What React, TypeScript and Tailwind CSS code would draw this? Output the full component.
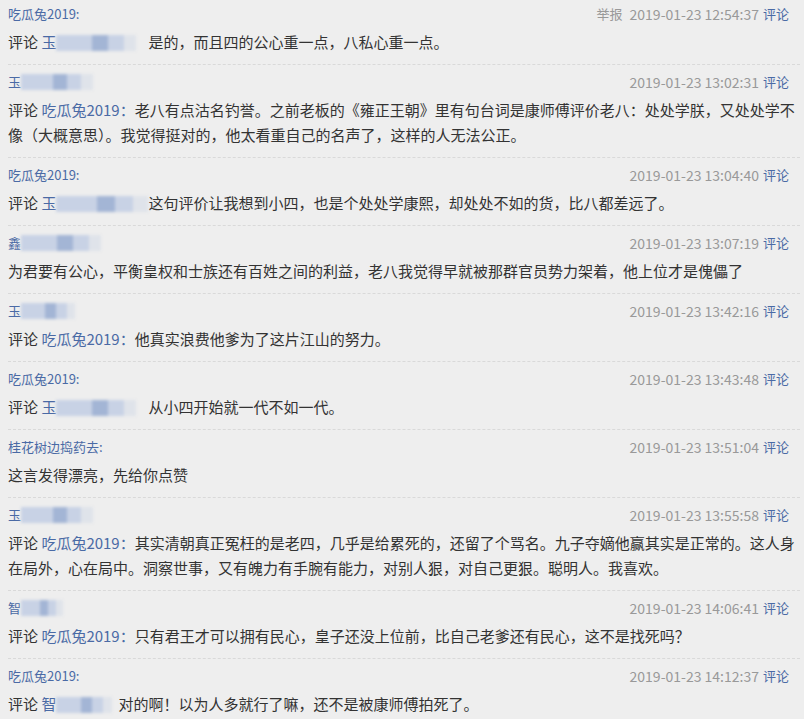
import React from 'react';

type Blur = { w: number; tone?: 'a' | 'b' | 'c' };

interface Entry {
  name: string;
  nameBlur?: number;
  time: string;
  report?: boolean;
  target?: string;
  targetBlur?: number;
  gap?: number;
  text: string;
}

const entries: Entry[] = [
  { name: '吃瓜兔2019:', time: '2019-01-23 12:54:37', report: true, target: '玉', targetBlur: 80, gap: 12, text: '是的，而且四的公心重一点，八私心重一点。' },
  { name: '玉', nameBlur: 72, time: '2019-01-23 13:02:31', target: '吃瓜兔2019：', text: '老八有点沽名钓誉。之前老板的《雍正王朝》里有句台词是康师傅评价老八：处处学朕，又处处学不像（大概意思）。我觉得挺对的，他太看重自己的名声了，这样的人无法公正。' },
  { name: '吃瓜兔2019:', time: '2019-01-23 13:04:40', target: '玉', targetBlur: 92, gap: 0, text: '这句评价让我想到小四，也是个处处学康熙，却处处不如的货，比八都差远了。' },
  { name: '鑫', nameBlur: 80, time: '2019-01-23 13:07:19', text: '为君要有公心，平衡皇权和士族还有百姓之间的利益，老八我觉得早就被那群官员势力架着，他上位才是傀儡了' },
  { name: '玉', nameBlur: 54, time: '2019-01-23 13:42:16', target: '吃瓜兔2019：', text: '他真实浪费他爹为了这片江山的努力。' },
  { name: '吃瓜兔2019:', time: '2019-01-23 13:43:48', target: '玉', targetBlur: 80, gap: 12, text: '从小四开始就一代不如一代。' },
  { name: '桂花树边捣药去:', time: '2019-01-23 13:51:04', text: '这言发得漂亮，先给你点赞' },
  { name: '玉', nameBlur: 72, time: '2019-01-23 13:55:58', target: '吃瓜兔2019：', text: '其实清朝真正冤枉的是老四，几乎是给累死的，还留了个骂名。九子夺嫡他赢其实是正常的。这人身在局外，心在局中。洞察世事，又有魄力有手腕有能力，对别人狠，对自己更狠。聪明人。我喜欢。' },
  { name: '智', nameBlur: 42, time: '2019-01-23 14:06:41', target: '吃瓜兔2019：', text: '只有君王才可以拥有民心，皇子还没上位前，比自己老爹还有民心，这不是找死吗？' },
  { name: '吃瓜兔2019:', time: '2019-01-23 14:12:37', target: '智', targetBlur: 56, gap: 6, text: '对的啊！以为人多就行了嘛，还不是被康师傅拍死了。' },
];

// smudged nickname, painted as a few soft tinted blocks
const Smudge = ({ w }: { w: number }) => {
  const parts: Blur[] = [
    { w: Math.round(w * 0.45), tone: 'a' },
    { w: Math.round(w * 0.2), tone: 'b' },
    { w: Math.round(w * 0.2), tone: 'a' },
    { w: w - Math.round(w * 0.45) - 2 * Math.round(w * 0.2), tone: 'c' },
  ];
  return (
    <span className="inline-flex h-[16px] align-[-3px] blur-[1.5px]" style={{ width: w }}>
      {parts.map((p, i) => (
        <span
          key={i}
          className={
            p.tone === 'a'
              ? 'h-full bg-[#c8d2e5]'
              : p.tone === 'b'
              ? 'h-full bg-[#a3b5d5]'
              : 'h-full bg-[#dfe3ea]'
          }
          style={{ width: p.w }}
        />
      ))}
    </span>
  );
};

const CommentRow = ({ e, first }: { e: Entry; first?: boolean }) => (
  <div className={`border-b border-dashed border-[#d9d9d9] pb-[10px] ${first ? 'pt-[4px]' : 'pt-[7px]'}`}>
    <div className="flex items-center justify-between h-[20px] text-[13px] leading-[20px] pr-[11px]">
      <span className="text-[#4a6aa5] flex items-center">
        {e.name}
        {e.nameBlur ? <Smudge w={e.nameBlur} /> : null}
      </span>
      <span className="text-[#999999] flex items-center">
        {e.report && <span className="mr-[7px] text-[13px]">举报</span>}
        <span className="text-[14px]">{e.time}</span>
        <span className="text-[#4a6aa5] ml-[4px]">评论</span>
      </span>
    </div>
    <p className="mt-[5px] text-[15px] leading-[25px] text-[#333333] pr-[2px]">
      {e.target && (
        <>
          {'评论 '}
          <span className="text-[#4a6aa5]">{e.target}</span>
          {e.targetBlur ? <Smudge w={e.targetBlur} /> : null}
          {e.gap ? <span className="inline-block" style={{ width: e.gap }} /> : null}
        </>
      )}
      {e.text}
    </p>
  </div>
);

export default function App() {
  return (
    <div
      className="w-[804px] h-[719px] overflow-hidden bg-[#eeeeee] pl-[8px] pr-[4px]"
      style={{ fontFamily: '"Microsoft YaHei", "Noto Sans CJK SC", sans-serif' }}
    >
      {entries.map((e, i) => (
        <CommentRow key={i} e={e} first={i === 0} />
      ))}
    </div>
  );
}
